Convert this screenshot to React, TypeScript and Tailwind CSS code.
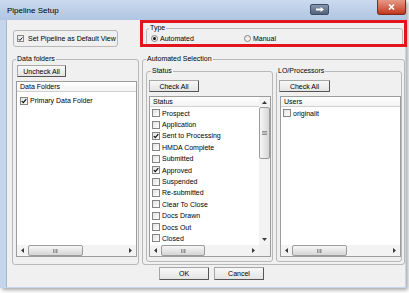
import React from "react";

function Check({ checked, size = "h-[8px] w-[8px]" }: { checked?: boolean; size?: string }) {
  return (
    <span
      className={
        "flex shrink-0 items-center justify-center border border-[#858585] bg-linear-to-br from-[#e2e2e2] to-white " +
        size
      }
    >
      {checked && (
        <svg viewBox="0 0 8 8" className="h-[6px] w-[6px]">
          <path d="M1 4.2 L3.1 6.3 L7 1.6" fill="none" stroke="#111" strokeWidth="1.6" />
        </svg>
      )}
    </span>
  );
}

function Radio({ checked }: { checked?: boolean }) {
  return (
    <span className="flex h-[7px] w-[7px] shrink-0 items-center justify-center rounded-full border border-[#858585] bg-linear-to-br from-[#e0e0e0] to-white">
      {checked && <span className="h-[3px] w-[3px] rounded-full bg-[#111]" />}
    </span>
  );
}

function Btn({ label, className }: { label: string; className: string }) {
  return (
    <div
      className={
        "flex items-center justify-center rounded-[1px] border border-[#a6a6a6] border-b-[#555] border-r-[#555] bg-linear-to-b from-[#f8f8f8] to-[#e4e4e4] text-[7px] leading-none text-black " +
        className
      }
    >
      {label}
    </div>
  );
}

function Row({ label, checked, className = "" }: { label: string; checked?: boolean; className?: string }) {
  return (
    <div className={"flex h-[11.4px] shrink-0 items-center gap-[2px] " + className}>
      <Check checked={checked} />
      <span className="whitespace-nowrap text-[7px] leading-none text-black">{label}</span>
    </div>
  );
}

function Grip({ vertical }: { vertical?: boolean }) {
  return vertical ? (
    <svg viewBox="0 0 5 4" className="h-[4px] w-[5px]">
      <path d="M0 0.5 H5 M0 2 H5 M0 3.5 H5" stroke="#7d7d7d" strokeWidth="0.8" />
    </svg>
  ) : (
    <svg viewBox="0 0 5 4" className="h-[4px] w-[5px]">
      <path d="M0.5 0 V4 M2 0 V4 M3.5 0 V4 M5 0 V4" stroke="#7d7d7d" strokeWidth="0.8" />
    </svg>
  );
}

function HScroll({ thumb }: { thumb: string }) {
  return (
    <div className="flex h-[11px] flex-1 items-stretch bg-[#f3f3f3]">
      <div className="flex w-[11px] shrink-0 items-center justify-center">
        <svg viewBox="0 0 3 5" className="h-[5px] w-[3px]">
          <path d="M3 0 L0 2.5 L3 5 Z" fill="#3a3a3a" />
        </svg>
      </div>
      <div className="flex flex-1 items-stretch">
        <div
          className={
            "flex items-center justify-center rounded-[2px] border border-[#9b9b9b] bg-linear-to-b from-[#f6f6f6] to-[#d6d6d6] " +
            thumb
          }
        >
          <Grip />
        </div>
      </div>
      <div className="flex w-[11px] shrink-0 items-center justify-center">
        <svg viewBox="0 0 3 5" className="h-[5px] w-[3px]">
          <path d="M0 0 L3 2.5 L0 5 Z" fill="#3a3a3a" />
        </svg>
      </div>
    </div>
  );
}

function Header({ label }: { label: string }) {
  return (
    <div className="flex h-[10px] shrink-0 items-center border-b border-[#d2d2d2] bg-linear-to-b from-white to-[#f3f3f3] pl-[3px] text-[7px] leading-none text-black">
      {label}
    </div>
  );
}

const legend = "px-[1px] text-[7px] leading-[8px] text-black";
const fs = "border border-[#b8b8b8] rounded-[3px]";

const statuses: [string, boolean][] = [
  ["Prospect", false],
  ["Application", false],
  ["Sent to Processing", true],
  ["HMDA Complete", false],
  ["Submitted", false],
  ["Approved", true],
  ["Suspended", false],
  ["Re-submitted", false],
  ["Clear To Close", false],
  ["Docs Drawn", false],
  ["Docs Out", false],
  ["Closed", false],
];

export default function App() {
  return (
    <div className="relative h-[293px] w-[409px] overflow-hidden bg-white font-['Liberation_Sans',Arial,sans-serif]">
      <div className="flex h-[288px] w-[406px] flex-col bg-[#c6d6ea] shadow-[2px_2px_4px_rgba(0,0,0,0.35)]">
        {/* Title bar */}
        <div className="flex h-[20px] shrink-0 items-start bg-linear-to-b from-[#cbdaee] to-[#afc5e2]">
          <span className="ml-[7px] mt-[6px] text-[8px] leading-[10px] text-black">Pipeline Setup</span>
          <div className="ml-auto mt-[4px] flex h-[11px] w-[19px] items-center justify-center rounded-[2px] border border-[#3e4d63] bg-linear-to-b from-[#8796ad] to-[#52627b]">
            <svg viewBox="0 0 8 5" className="h-[5px] w-[8px]">
              <path d="M0 1.5 H4.5 V0 L8 2.5 L4.5 5 V3.5 H0 Z" fill="#fff" />
            </svg>
          </div>
          <div className="ml-[48px] flex h-[15px] w-[29px] items-center justify-center rounded-b-[3px] border border-t-0 border-[#7c2a1c] bg-linear-to-b from-[#e49a86] to-[#c1321a]">
            <svg viewBox="0 0 7 6" className="h-[6px] w-[7px]">
              <path d="M1 0.5 L6 5.5 M6 0.5 L1 5.5" stroke="#fff" strokeWidth="1.6" />
            </svg>
          </div>
        </div>

        {/* Client */}
        <div className="mb-[1px] ml-[6px] mr-[1px] flex flex-1 flex-col border-l border-[#a9b6c7] bg-[#f0f0f0]">
          {/* Row 1 */}
          <div className="flex h-[35px] shrink-0 items-start">
            <div className={"ml-[6px] mt-[10px] flex h-[17px] w-[105px] items-center gap-[4px] pl-[3px] " + fs}>
              <Check checked size="h-[7px] w-[7px]" />
              <span className="whitespace-nowrap text-[7px] leading-none text-black">Set Pipeline as Default View</span>
            </div>
            <fieldset className={"ml-[28px] mt-[4px] h-[23px] w-[257px] " + fs}>
              <legend className={"ml-[2px] " + legend}>Type</legend>
              <div className="mt-[2px] flex h-[9px] items-center pl-[4px]">
                <div className="flex w-[93px] items-center gap-[2px]">
                  <Radio checked />
                  <span className="text-[7px] leading-none text-black">Automated</span>
                </div>
                <div className="flex items-center gap-[2px]">
                  <Radio />
                  <span className="text-[7px] leading-none text-black">Manual</span>
                </div>
              </div>
            </fieldset>
          </div>

          {/* Row 2 */}
          <div className="flex h-[210px] shrink-0 items-start">
            {/* Data folders */}
            <fieldset className={"ml-[5px] flex h-[210px] w-[127px] flex-col " + fs}>
              <legend className={"ml-[3px] " + legend}>Data folders</legend>
              <Btn label="Uncheck All" className="ml-[4px] mt-[2px] h-[12px] w-[49px]" />
              <div className="ml-[3px] mt-[4px] flex h-[176px] w-[121px] flex-col border border-[#9c9c9c] bg-white">
                <Header label="Data Folders" />
                <div className="flex flex-1 flex-col pl-[3px] pt-[3px]">
                  <Row label="Primary Data Folder" checked />
                </div>
                <div className="flex">
                  <HScroll thumb="ml-[0px] w-[55px]" />
                </div>
              </div>
            </fieldset>

            {/* Automated Selection */}
            <fieldset className={"ml-[3px] h-[210px] w-[263px] " + fs}>
              <legend className={"ml-[3px] " + legend}>Automated Selection</legend>
              <div className="ml-[3px] mt-[4px] flex">
                {/* Status */}
                <fieldset className={"flex h-[195px] w-[127px] flex-col " + fs}>
                  <legend className={"ml-[4px] " + legend}>Status</legend>
                  <Btn label="Check All" className="ml-[2px] mt-[5px] h-[12px] w-[50px]" />
                  <div className="ml-[2px] mt-[4px] flex h-[161px] w-[122px] flex-col border border-[#9c9c9c] bg-white">
                    <div className="flex min-h-0 flex-1">
                      <div className="flex flex-1 flex-col overflow-hidden">
                        <Header label="Status" />
                        <div className="flex flex-col pl-[2px] pt-[0.5px]">
                          {statuses.map(([s, c]) => (
                            <Row key={s} label={s} checked={c} />
                          ))}
                        </div>
                      </div>
                      <div className="flex w-[11px] shrink-0 flex-col bg-[#f3f3f3]">
                        <div className="flex h-[10px] items-center justify-center">
                          <svg viewBox="0 0 5 3" className="h-[3px] w-[5px]">
                            <path d="M0 3 L2.5 0 L5 3 Z" fill="#3a3a3a" />
                          </svg>
                        </div>
                        <div className="flex h-[52px] items-center justify-center rounded-[2px] border border-[#9b9b9b] bg-linear-to-r from-[#f6f6f6] to-[#d6d6d6]">
                          <Grip vertical />
                        </div>
                        <div className="flex-1" />
                        <div className="flex h-[11px] items-center justify-center">
                          <svg viewBox="0 0 5 3" className="h-[3px] w-[5px]">
                            <path d="M0 0 L2.5 3 L5 0 Z" fill="#3a3a3a" />
                          </svg>
                        </div>
                      </div>
                    </div>
                    <div className="flex">
                      <HScroll thumb="ml-[0px] w-[44px]" />
                      <div className="w-[11px] bg-[#f0f0f0]" />
                    </div>
                  </div>
                </fieldset>

                {/* LO/Processors */}
                <fieldset className={"ml-[3px] flex h-[195px] w-[126px] flex-col " + fs}>
                  <legend className={"ml-[0px] " + legend}>LO/Processors</legend>
                  <Btn label="Check All" className="ml-[2px] mt-[5px] h-[12px] w-[51px]" />
                  <div className="ml-[3px] mt-[4px] flex h-[161px] w-[121px] flex-col border border-[#9c9c9c] bg-white">
                    <Header label="Users" />
                    <div className="flex flex-1 flex-col pl-[2px] pt-[0.5px]">
                      <Row label="originalit" />
                    </div>
                    <div className="flex">
                      <HScroll thumb="ml-[0px] w-[55px]" />
                    </div>
                  </div>
                </fieldset>
              </div>
            </fieldset>
          </div>

          {/* Buttons */}
          <div className="mt-[2px] flex">
            <Btn label="OK" className="ml-[152px] h-[13px] w-[50px]" />
            <Btn label="Cancel" className="ml-[5px] h-[13px] w-[50px]" />
          </div>
        </div>
      </div>

      {/* Red annotation rectangle */}
      <div className="absolute left-[140px] top-[20px] h-[27px] w-[267px] border-[3px] border-[#e3151c]" />
    </div>
  );
}
